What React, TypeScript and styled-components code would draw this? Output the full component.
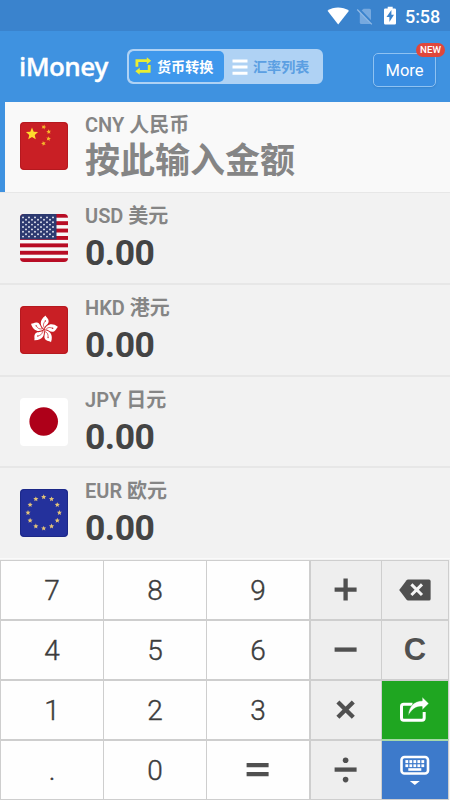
import React from "react";
import styled, { createGlobalStyle } from "styled-components";

const Global = createGlobalStyle`
  * { box-sizing: border-box; }
  body { margin: 0; background: #f2f2f2; font-family: Roboto, "Noto Sans CJK SC", sans-serif; }
`;

const Screen = styled.div`
  width: 450px;
  height: 800px;
  overflow: hidden;
  display: flex;
  flex-direction: column;
  background: #f2f2f2;
`;

const StatusBar = styled.div`
  height: 31px;
  flex: none;
  background: #3a83cd;
  display: flex;
  justify-content: flex-end;
  align-items: center;
  padding: 0 10px 0 0;
  color: #fff;
`;

const Clock = styled.span`
  font-size: 18px;
  font-weight: 500;
  line-height: 22px;
  width: 35px;
  white-space: nowrap;
  margin-left: 8px;
  padding-top: 2px;
  letter-spacing: -0.1px;
`;

const Header = styled.header`
  height: 71px;
  flex: none;
  background: #3f92e0;
  display: flex;
  align-items: flex-start;
  padding: 0 14px 0 19px;
`;

const Brand = styled.h1`
  margin: 18px 0 0;
  width: 108px;
  font: 600 26px/34px "Open Sans", "Noto Sans", sans-serif;
  letter-spacing: -0.6px;
  color: #fff;
  -webkit-text-stroke: 0.3px #fff;
`;

const Segments = styled.div`
  margin-top: 18px;
  width: 196px;
  height: 35px;
  border: 2px solid #afd2f4;
  border-radius: 6px;
  background: #afd2f4;
  display: flex;
  overflow: hidden;
`;

const Segment = styled.div<{ $active?: boolean }>`
  width: ${(p) => (p.$active ? 95 : 97)}px;
  flex: none;
  display: flex;
  align-items: center;
  padding: 0 0 1px ${(p) => (p.$active ? 6 : 8)}px;
  gap: ${(p) => (p.$active ? 4 : 5)}px;
  font: 700 14.1px/20px "Noto Sans CJK SC", sans-serif;
  white-space: nowrap;
  color: ${(p) => (p.$active ? "#fff" : "#5b9fe2")};
  background: ${(p) => (p.$active ? "#3f98ec" : "transparent")};
  border-radius: 5px;
  svg { flex: none; margin-top: 1px; }
`;

const MoreButton = styled.button`
  position: relative;
  margin: 22px 0 0 auto;
  padding: 0;
  width: 63px;
  height: 34px;
  border: 1px solid #8fc2f2;
  border-radius: 5px;
  background: #3a8ee2;
  box-shadow: 0 1px 2px rgba(20, 70, 130, 0.2);
  font: 400 16.5px/33px Roboto, sans-serif;
  color: #fff;
`;

const NewBadge = styled.span`
  position: absolute;
  top: -11px;
  right: -10px;
  width: 29px;
  height: 14px;
  border-radius: 7px;
  background: #e0473b;
  font: 500 9.7px/14px Roboto, sans-serif;
  text-align: center;
`;

const Flag = styled.svg`
  width: 48px;
  height: 48px;
  border-radius: 4px;
  flex: none;
`;

const CurrencyList = styled.main`
  height: 456px;
  flex: none;
  display: grid;
  grid-template-rows: 91px 92px 92px 91px 90px;
`;

const CurrencyRow = styled.section<{ $selected?: boolean }>`
  display: flex;
  padding: 20px 0 0 20px;
  box-shadow: ${(p) => (p.$selected ? "inset 5px 0 #3f92e0" : "none")};
  border-bottom: ${(p) => (p.$selected ? 1 : 2)}px solid #e7e7e7;
  background: ${(p) => (p.$selected ? "#f9f9f9" : "#f2f2f2")};
  &:last-child { border-bottom: 0; }
  &:not(:first-child) > ${Flag} { margin-top: 1px; }
`;

const CurrencyText = styled.div`
  margin: -9px 0 0 17px;
`;

const CurrencyName = styled.div<{ $first?: boolean }>`
  height: 24px;
  font: 600 20px/${(p) => (p.$first ? 24 : 25)}px Roboto, "Noto Sans CJK SC", sans-serif;
  color: #858585;
  white-space: nowrap;
`;

const Amount = styled.div<{ $prompt?: boolean }>`
  height: 42px;
  margin-top: 4px;
  font: ${(p) => (p.$prompt ? "700 35px/42px" : "700 35.5px/42px")} Roboto, "Noto Sans CJK SC", sans-serif;
  color: ${(p) => (p.$prompt ? "#858585" : "#444")};
  white-space: nowrap;
  letter-spacing: ${(p) => (p.$prompt ? 0 : -0.5)}px;
`;

const Keypad = styled.div`
  height: 242px;
  flex: none;
  border-top: 1px solid #fafafa;
  padding: 1px 1px 0 0;
  display: grid;
  grid-template-columns: 103px 103px 103px 72px 68px;
  grid-template-rows: 59px 60px 60px 61px;
`;

type Tone = "digit" | "op" | "share" | "hide";
const tones: Record<Tone, string> = {
  digit: "#fefefe",
  op: "#eee",
  share: "#1fa621",
  hide: "#3d7acb",
};

const Key = styled.button<{ $tone: Tone }>`
  margin: 0;
  padding: 0 0 1px;
  border: solid #cecece;
  border-width: 2px 0 0 1px;
  border-top-color: ${(p) => (p.$tone === "hide" ? "#a5d9a9" : "#cecece")};
  background: ${(p) => tones[p.$tone]};
  color: #3c3c3c;
  font: 400 28px/58px Roboto, sans-serif;
  display: flex;
  align-items: center;
  justify-content: center;
  &:nth-child(-n + 5) { border-top-width: 1px; padding-bottom: 0; }
  &:nth-child(n + 16) { border-bottom-width: 1px; }
  &:nth-child(5n + 4) { border-left-width: 2px; }
  &:nth-child(5n) { border-right-width: 1px; }
`;

const Numeral = styled.span`
  padding-top: 2px;
  font-weight: 300;
  -webkit-text-stroke: 0.4px #3c3c3c;
`;

const ClearLabel = styled.span`
  font: 700 31px/58px "Liberation Sans", Arial, sans-serif;
  color: #505050;
`;

const starPoints = (cx: number, cy: number, r: number, turn = 0) =>
  Array.from({ length: 10 }, (_, i) => {
    const a = ((i * 36 - 90 + turn) * Math.PI) / 180;
    const d = i % 2 ? r * 0.45 : r;
    return `${cx + d * Math.cos(a)},${cy + d * Math.sin(a)}`;
  }).join(" ");

const ChinaFlag = () => (
  <Flag viewBox="0 0 48 48">
    <rect width="48" height="48" fill="#c91f25" />
    <rect x="0.5" y="0.5" width="47" height="47" rx="4" fill="none" stroke="#b5191f" />
    <polygon points={starPoints(12, 12, 6.4)} fill="#ffdb2d" />
    {[[23.7, 5, 18], [28.7, 9.8, -10], [28.5, 16.7, 10], [23.6, 21.5, -18]].map(([x, y, t]) => (
      <polygon key={y} points={starPoints(x, y, 2.5, t)} fill="#f6b92b" />
    ))}
  </Flag>
);

const UsaFlag = () => (
  <Flag viewBox="0 0 48 48">
    <rect width="48" height="48" fill="#f8f8f8" />
    {[0, 1, 2, 3, 4, 5, 6].map((i) => (
      <rect key={i} y={i * 7.4 - 0.2} width="48" height="3.9" fill="#b80d25" />
    ))}
    <rect width="36.5" height="25.4" fill="#2d3a70" />
    {Array.from({ length: 9 }, (_, r) =>
      Array.from({ length: r % 2 ? 5 : 6 }, (_, c) => (
        <circle key={`${r}-${c}`} cx={3 + c * 6 + (r % 2 ? 3 : 0)} cy={3.4 + r * 2.4} r="0.95" fill="#e6e9f2" />
      ))
    )}
  </Flag>
);

const HongKongFlag = () => (
  <Flag viewBox="0 0 48 48">
    <rect width="48" height="48" fill="#c91f25" />
    <rect x="0.5" y="0.5" width="47" height="47" rx="4" fill="none" stroke="#b5191f" />
    {[0, 72, 144, 216, 288].map((a) => (
      <g key={a} transform={`translate(24 23.7) rotate(${a + 10})`}>
        <path d="M0 -0.7C-4.4 -2.8 -6.8 -8.6 -0.8 -14.3C-0.6 -12.8 3 -12 3.2 -8.6C3.3 -5.5 -0.4 -4 0 -0.7Z" fill="#fff" />
        <path d="M-0.1 -2C-2.1 -4.6 -1.6 -6.2 -0.4 -8.4" fill="none" stroke="#c91f25" strokeWidth="0.65" />
        <circle cx="-0.2" cy="-8.8" r="0.7" fill="#c91f25" />
      </g>
    ))}
  </Flag>
);

const JapanFlag = () => (
  <Flag viewBox="0 0 48 48">
    <rect width="48" height="48" fill="#fff" />
    <circle cx="23.7" cy="23.5" r="14.3" fill="#ae0019" />
  </Flag>
);

const EuroFlag = () => (
  <Flag viewBox="0 0 48 48">
    <rect width="48" height="48" fill="#24319c" />
    <rect x="0.5" y="0.5" width="47" height="47" rx="4" fill="none" stroke="#1c2887" />
    {Array.from({ length: 12 }, (_, i) => {
      const a = (i * Math.PI) / 6;
      return <polygon key={i} points={starPoints(23.7 + 15.7 * Math.sin(a), 23.7 - 15.7 * Math.cos(a), 2.7)} fill="#e4c478" />;
    })}
  </Flag>
);

const StatusIcons = () => (
  <svg width="72" height="22" viewBox="0 0 72 22">
    <path d="M2.5 5.8C8.6 1.5 17.4 1.5 24 5.8L13.2 19.5Z" fill="#fff" />
    <path d="M35.2 6.5L38.7 3.7H44.5Q46 3.7 46 5.2V17.5Q46 19 44.5 19H36.3Q34.8 19 34.8 17.5V7Z" fill="#76a9df" />
    <path d="M33.3 3.7L47.8 19" stroke="#3a83cd" strokeWidth="2.6" />
    <path d="M32.2 4.5L46.8 19.4" stroke="#91bae5" strokeWidth="1.3" />
    <path d="M60.2 3.5H62.7V1.7H67.7V3.5H69.7Q71 3.5 71 4.7V18.3Q71 19.6 69.7 19.6H60.4Q59 19.6 59 18.3V4.7Q59 3.5 60.2 3.5Z" fill="#fff" />
    <path d="M66.4 5L61.5 11.9H64.4V17L69 9.7H66.4Z" fill="#3a83cd" />
  </svg>
);

const SwapIcon = () => (
  <svg width="18" height="19" viewBox="0.5 0.5 18 19" fill="none" stroke="#e9ed32" strokeWidth="2.8">
    <path d="M2.4 10.3V4.2H14M14.7 8.4V14.8H4" />
    <path d="M12.3 0.8L16.7 4.2L12.3 7.7ZM5.2 11.2L0.8 14.8L5.2 18.3Z" fill="#e9ed32" stroke="none" />
  </svg>
);

const ListIcon = () => (
  <svg width="16" height="16" viewBox="0 0 16 16" stroke="#fff" strokeWidth="3">
    <path d="M0.5 1.9H15.5M0.5 8.1H15.5M0.5 14.3H15.5" />
  </svg>
);

const Operator = ({ d, dots }: { d: string; dots?: boolean }) => (
  <svg width="30" height="30" viewBox="0.4 0.4 30 30" fill="none" stroke="#505050" strokeWidth="4.3">
    <path d={d} />
    {dots && <g fill="#505050" stroke="none"><circle cx="15" cy="5.6" r="2.8" /><circle cx="15" cy="25" r="2.8" /></g>}
  </svg>
);

const BackspaceIcon = () => (
  <svg width="32" height="22" viewBox="0 0.5 32 22">
    <path d="M9 1H30Q31.6 1 31.6 2.5V20.5Q31.6 22 30 22H9Q8.2 22 7.6 21.3L0.2 11.5L7.6 1.7Q8.2 1 9 1Z" fill="#505050" />
    <path d="M12.4 5.9L23 16.5M23 5.9L12.4 16.5" stroke="#f5f5f5" strokeWidth="3" />
  </svg>
);

const ShareIcon = () => (
  <svg width="30" height="28" viewBox="0.5 0 30 28">
    <path d="M13 8.3H4.2Q2 8.3 2 10.5V22Q2 24.2 4.2 24.2H22.5Q24.7 24.2 24.7 22V16" fill="none" stroke="#fff" strokeWidth="3" />
    <path d="M22.7 1L29.4 7.5L22.7 14V10.6C16.7 10.1 12.4 13.2 8.8 19.7C9 11.2 13.9 4.8 22.7 4.8Z" fill="#fff" stroke="#1fa621" strokeWidth="0.5" />
  </svg>
);

const KeyboardIcon = () => (
  <svg width="30" height="30" viewBox="0.5 0 30 30">
    <rect x="2" y="2" width="26.5" height="16.5" rx="3" fill="none" stroke="#fff" strokeWidth="2.6" />
    {[0, 1, 2, 3, 4].map((i) => (
      <g key={i} fill="#fff">
        <rect x={5.9 + i * 4} y="5.1" width="2.8" height="3" />
        <rect x={5.9 + i * 4} y="9.3" width="2.8" height="2.8" />
      </g>
    ))}
    <rect x="8.8" y="13.2" width="13" height="2.6" fill="#fff" />
    <path d="M10.3 26H20.3L15.3 30Z" fill="#fff" />
  </svg>
);

const currencies = [
  { name: "CNY 人民币", amount: "按此输入金额", Icon: ChinaFlag, prompt: true },
  { name: "USD 美元", amount: "0.00", Icon: UsaFlag },
  { name: "HKD 港元", amount: "0.00", Icon: HongKongFlag },
  { name: "JPY 日元", amount: "0.00", Icon: JapanFlag },
  { name: "EUR 欧元", amount: "0.00", Icon: EuroFlag },
];

const digit = (n: string) => ({ tone: "digit" as Tone, face: <Numeral>{n}</Numeral> });

const keys: { tone: Tone; face: React.ReactNode }[] = [
  digit("7"),
  digit("8"),
  digit("9"),
  { tone: "op", face: <Operator d="M4 15H26M15 4V26" /> },
  { tone: "op", face: <BackspaceIcon /> },
  digit("4"),
  digit("5"),
  digit("6"),
  { tone: "op", face: <Operator d="M4 15H26" /> },
  { tone: "op", face: <ClearLabel>C</ClearLabel> },
  digit("1"),
  digit("2"),
  digit("3"),
  { tone: "op", face: <Operator d="M7.3 7.3L22.7 22.7M22.7 7.3L7.3 22.7" /> },
  { tone: "share", face: <ShareIcon /> },
  digit("."),
  digit("0"),
  { tone: "digit", face: <Operator d="M4 10.5H26M4 19.5H26" /> },
  { tone: "op", face: <Operator d="M4 15H26" dots /> },
  { tone: "hide", face: <KeyboardIcon /> },
];

export default function App() {
  return (
    <Screen>
      <Global />
      <StatusBar>
        <StatusIcons />
        <Clock>5:58</Clock>
      </StatusBar>
      <Header>
        <Brand>iMoney</Brand>
        <Segments>
          <Segment $active><SwapIcon />货币转换</Segment>
          <Segment><ListIcon />汇率列表</Segment>
        </Segments>
        <MoreButton>More<NewBadge>NEW</NewBadge></MoreButton>
      </Header>
      <CurrencyList>
        {currencies.map(({ name, amount, Icon, prompt }) => (
          <CurrencyRow key={name} $selected={prompt}>
            <Icon />
            <CurrencyText>
              <CurrencyName $first={prompt}>{name}</CurrencyName>
              <Amount $prompt={prompt}>{amount}</Amount>
            </CurrencyText>
          </CurrencyRow>
        ))}
      </CurrencyList>
      <Keypad>
        {keys.map((key, i) => <Key key={i} $tone={key.tone}>{key.face}</Key>)}
      </Keypad>
    </Screen>
  );
}
